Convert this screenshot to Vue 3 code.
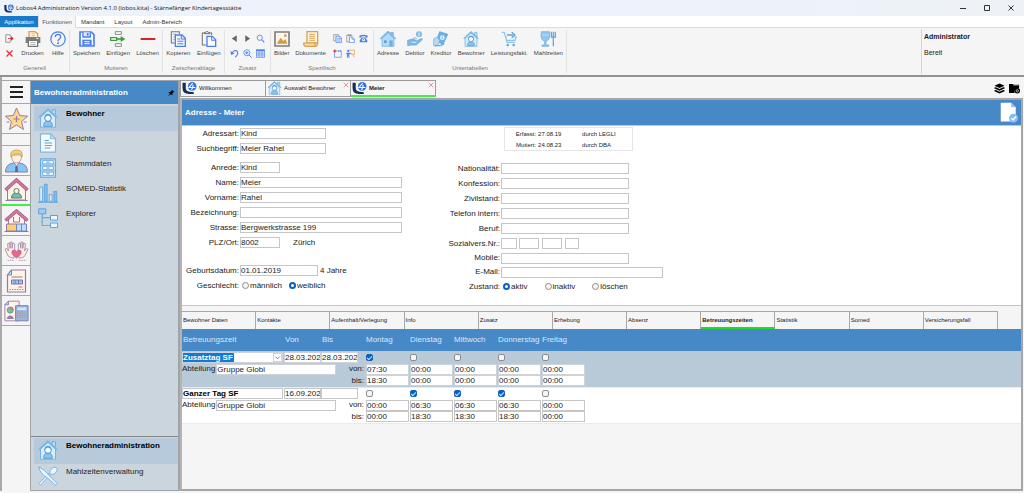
<script setup>
import { ref } from 'vue'

const menus = ['Applikation', 'Funktionen', 'Mandant', 'Layout', 'Admin-Bereich']

const groups = [
  {
    name: 'Generell',
    size: 'w70',
    small: [['exit', 'Beenden'], ['cross', 'Abbrechen']],
    smallCols: 'one',
    tools: [['printer', 'Drucken'], ['help', 'Hilfe']],
  },
  {
    name: 'Mutieren',
    size: 'w93',
    tools: [['save', 'Speichern'], ['insert', 'Einfügen'], ['minus', 'Löschen']],
  },
  {
    name: 'Zwischenablage',
    size: 'w62',
    tools: [['copy', 'Kopieren'], ['paste', 'Einfügen']],
  },
  {
    name: 'Zusatz',
    size: 'w46',
    small: [
      ['prev', 'Zurück'], ['next', 'Weiter'], ['search', 'Suchen'],
      ['undo', 'Rückgängig'], ['zoomin', 'Vergrössern'], ['grid', 'Tabelle'],
    ],
    tools: [],
  },
  {
    name: 'Spezifisch',
    size: 'w103',
    tools: [['picture', 'Bilder'], ['scroll', 'Dokumente']],
    small: [
      ['copy', 'Kopie'], ['paste', 'Ablage'], ['phone', 'Telefon'],
      ['newdate', 'Termin'], ['board', 'Schulung'],
    ],
    smallLast: true,
  },
  {
    name: 'Untertabellen',
    size: 'w193',
    tools: [
      ['home', 'Adresse'], ['handcoin', 'Debitor'], ['cash', 'Kreditor'],
      ['resident', 'Bewohner'], ['cart', 'Leistungsfakt.'], ['meal', 'Mahlzeiten'],
    ],
  },
]

const rail = [
  { icon: 'star', label: 'Favoriten' },
  { icon: '', label: '' },
  { icon: 'person', label: 'Personen' },
  { icon: 'houseperson', label: 'Bewohner', active: true },
  { icon: 'housebig', label: 'Haus' },
  { icon: 'hands', label: 'Pflege' },
  { icon: 'invoice', label: 'Rechnungen' },
  { icon: 'calc', label: 'Abrechnung' },
]

const nav = [
  { icon: 'resident', label: 'Bewohner', active: true },
  { icon: 'report', label: 'Berichte' },
  { icon: 'drawers', label: 'Stammdaten' },
  { icon: 'bars', label: 'SOMED-Statistik' },
  { icon: 'tree', label: 'Explorer' },
]
const modules = [
  { icon: 'resident', label: 'Bewohneradministration', active: true },
  { icon: 'cutlery', label: 'Mahlzeitenverwaltung' },
]

const docs = [
  { icon: 'logo', label: 'Willkommen' },
  { icon: 'resident', label: 'Auswahl Bewohner', closable: true },
  { icon: 'logo', label: 'Meier', closable: true, active: true },
]

const leftFields = [
  { id: 'art', label: 'Adressart:', value: 'Kind', size: 'm' },
  { id: 'such', label: 'Suchbegriff:', value: 'Meier Rahel', size: 'm', end: true },
  { id: 'anrede', label: 'Anrede:', value: 'Kind', size: 's' },
  { id: 'name', label: 'Name:', value: 'Meier', size: 'l' },
  { id: 'vorname', label: 'Vorname:', value: 'Rahel', size: 'l' },
  { id: 'bez', label: 'Bezeichnung:', value: '', size: 'l' },
  { id: 'strasse', label: 'Strasse:', value: 'Bergwerkstrasse 199', size: 'l' },
  { id: 'plz', label: 'PLZ/Ort:', value: '8002', size: 's', note: 'Zürich', far: true, wide: true },
  { id: 'geb', label: 'Geburtsdatum:', value: '01.01.2019', size: 'd', note: '4 Jahre' },
]
const rightFields = [
  { id: 'nat', label: 'Nationalität:' },
  { id: 'konf', label: 'Konfession:' },
  { id: 'ziv', label: 'Zivilstand:' },
  { id: 'tel', label: 'Telefon intern:' },
  { id: 'beruf', label: 'Beruf:' },
]
const geschlecht = ref('weiblich')
const zustand = ref('aktiv')

const tabs = [
  'Bewohner Daten', 'Kontakte', 'Aufenthalt/Verlegung', 'Info', 'Zusatz', 'Erhebung',
  'Absenz', 'Betreuungszeiten', 'Statistik', 'Somed', 'Versicherungsfall',
]
const days = ['Montag', 'Dienstag', 'Mittwoch', 'Donnerstag', 'Freitag']
const entries = ref([
  {
    name: 'Zusatztag SF', selected: true, from: '28.03.2022', to: '28.03.2022', dept: 'Gruppe Globi',
    on: [true, false, false, false, false],
    von: ['07:30', '00:00', '00:00', '00:00', '00:00'],
    bis: ['18:30', '00:00', '00:00', '00:00', '00:00'],
  },
  {
    name: 'Ganzer Tag SF', selected: false, from: '16.09.202', to: '', dept: 'Gruppe Globi',
    on: [false, true, true, true, false],
    von: ['00:00', '06:30', '06:30', '06:30', '00:00'],
    bis: ['00:00', '18:30', '18:30', '18:30', '00:00'],
  },
])
</script>

<template>
  <div class="app">
    <svg class="sprite" aria-hidden="true">
      <symbol id="logo" viewBox="0 0 28 24">
        <path d="M1 2h6v10q0 6 7 7l8 1v3h-9Q1 23 1 12z" fill="#1b2a5e" />
        <ellipse cx="19" cy="9" rx="8" ry="8" fill="#2f6fe4" />
        <path d="M20 3l-7 8h12M21 6l-3 10" stroke="#fff" stroke-width="2" fill="none" />
      </symbol>
      <symbol id="exit" viewBox="0 0 24 24">
        <path d="M14 7V2H2v20h12v-5" fill="none" stroke="#777" stroke-width="2" />
        <path d="M8 12h13M16 7l6 5-6 5z" fill="#d4222a" stroke="#d4222a" stroke-width="2" />
      </symbol>
      <symbol id="cross" viewBox="0 0 24 24">
        <path d="M4 4l16 16M20 4L4 20" stroke="#d9363e" stroke-width="3.500" />
      </symbol>
      <symbol id="thin-x" viewBox="0 0 24 24">
        <path d="M3 3l18 18M21 3L3 21" stroke="currentColor" stroke-width="3" />
      </symbol>
      <symbol id="printer" viewBox="0 0 24 24">
        <path d="M6 9V1h9l4 3v5" fill="#fff1dd" stroke="#e0a04c" stroke-width="2" />
        <path d="M10 4h5M10 7h5" stroke="#e0a04c" />
        <path d="M1 9h22v9h-4v-4H5v4H1z" fill="#7c7c7c" />
        <path d="M5 14h14v9H5z" fill="#fff" stroke="#777" stroke-width="2" />
        <path d="M8 17h8M8 20h8" stroke="#888" />
        <path d="M17 11h3" stroke="#fff" stroke-width="1.5" />
      </symbol>
      <symbol id="help" viewBox="0 0 24 24">
        <circle cx="12" cy="12" r="10.8" fill="none" stroke="#4c7ff0" stroke-width="1.8" />
        <path d="M8 9q0-4 4-4t4 3.500q0 2-2 3.500-2 1.300-2 3.500" fill="none" stroke="#4c7ff0" stroke-width="2" />
        <circle cx="12" cy="18.500" r="1.500" fill="#4c7ff0" />
      </symbol>
      <symbol id="save" viewBox="0 0 24 24">
        <path d="M1.500 1.500h17l4 4v17h-21z" fill="#f5f8ff" stroke="#4c7ff0" stroke-width="2.500" />
        <path d="M6 2v7h11V2" fill="#dfe8ff" stroke="#4c7ff0" stroke-width="2" />
        <path d="M13 3v4" stroke="#4c7ff0" stroke-width="2.500" />
        <path d="M5 22v-9h14v9z" fill="#4c7ff0" />
        <path d="M8 16h8M8 19h8" stroke="#fff" stroke-width="1.500" />
      </symbol>
      <symbol id="insert" viewBox="0 0 24 24">
        <path d="M8 1h9v4H8zM8 19h9v4H8z" fill="#fff" stroke="#888" stroke-width="1.500" />
        <path d="M1 10h9v4H1z" fill="#fff" stroke="#35a03a" stroke-width="1.800" />
        <path d="M10 12h8" stroke="#35a03a" stroke-width="2.500" />
        <path d="M16 7.500l7 4.500-7 4.500z" fill="#35a03a" />
      </symbol>
      <symbol id="minus" viewBox="0 0 24 24">
        <path d="M1 12h22" stroke="#d8232b" stroke-width="3" />
      </symbol>
      <symbol id="copy" viewBox="0 0 24 24">
        <path d="M7 18H2V1h12v4" fill="none" stroke="#777" stroke-width="1.600" />
        <path d="M5 5h4M5 9h2M5 13h2" stroke="#777" />
        <path d="M8 6h10l5 5v12H8z" fill="#f5f8ff" stroke="#4c7ff0" stroke-width="2" />
        <path d="M17 6v6h6M11 12h4M11 15.500h9M11 19h9" fill="none" stroke="#4c7ff0" stroke-width="1.600" />
      </symbol>
      <symbol id="paste" viewBox="0 0 24 24">
        <path d="M8 21H2V3h14v3" fill="none" stroke="#777" stroke-width="1.600" />
        <path d="M5 4V2h2q2-3 4 0h2v2z" fill="#f5f5f5" stroke="#666" stroke-width="1.400" />
        <path d="M9 8h8l5 5v10H9z" fill="#fff" stroke="#4c7ff0" stroke-width="2" />
        <path d="M16 8v6h6" fill="none" stroke="#4c7ff0" stroke-width="1.600" />
      </symbol>
      <symbol id="prev" viewBox="0 0 24 24"><path d="M18 3v18L5 12z" fill="#666" /></symbol>
      <symbol id="next" viewBox="0 0 24 24"><path d="M6 3v18l13-9z" fill="#666" /></symbol>
      <symbol id="search" viewBox="0 0 24 24">
        <circle cx="10" cy="10" r="7" fill="none" stroke="#5c8bf2" stroke-width="2.400" />
        <path d="M15 15l7 7" stroke="#5c8bf2" stroke-width="3" />
      </symbol>
      <symbol id="zoomin" viewBox="0 0 24 24">
        <circle cx="10" cy="10" r="8" fill="none" stroke="#5c8bf2" stroke-width="2.400" />
        <path d="M16 16l7 7M6 10h8M10 6v8" stroke="#4c7ff0" stroke-width="2.600" />
      </symbol>
      <symbol id="undo" viewBox="0 0 24 24">
        <path d="M5 11Q12 1 19 6q5 8-5 16" fill="none" stroke="#4c7ff0" stroke-width="3" />
        <path d="M1 5l2 11 9-4z" fill="#4c7ff0" />
      </symbol>
      <symbol id="grid" viewBox="0 0 24 24">
        <path d="M1 2h22v20H1z" fill="#eaf1ff" stroke="#4c7ff0" stroke-width="2" />
        <path d="M1 4h22" stroke="#4c7ff0" stroke-width="4" />
        <path d="M1 11h22M1 16h22M8 4v18M16 4v18" stroke="#4c7ff0" stroke-width="1.700" />
      </symbol>
      <symbol id="picture" viewBox="0 0 24 24">
        <path d="M1.500 1.500h21v21h-21z" fill="#fbf7f0" stroke="#7c7c7c" stroke-width="2.400" />
        <path d="M4 19l6-9 4 5 3-3 3 7z" fill="#d9993f" />
        <circle cx="17" cy="7" r="2" fill="#d9993f" />
      </symbol>
      <symbol id="scroll" viewBox="0 0 24 24">
        <path d="M6 1h16v17H6z" fill="#fff6e6" stroke="#dba04d" stroke-width="2" />
        <path d="M9 5h9M9 8h9M9 11h9M9 14h9" stroke="#dba04d" stroke-width="1.400" />
        <path d="M1 18h17v5H4q-3 0-3-5zM18 23q4 0 4-5" fill="#f6d8a7" stroke="#dba04d" stroke-width="1.800" />
      </symbol>
      <symbol id="phone" viewBox="0 0 24 24">
        <path d="M1 9V6q0-4 11-4t11 4v3h-6V6H7v3z" fill="#4c7ff0" />
        <path d="M7 9h10l5 8v5H2v-5z" fill="#4c7ff0" />
        <circle cx="12" cy="15" r="4" fill="#fff" /><circle cx="12" cy="15" r="1.500" fill="#4c7ff0" />
      </symbol>
      <symbol id="newdate" viewBox="0 0 24 24">
        <path d="M4 10v12h18V5H11" fill="none" stroke="#5c8bf2" stroke-width="2" />
        <path d="M15 3v5M20 3v5" stroke="#5c8bf2" stroke-width="2" />
        <path d="M5 1v9M.500 5.500h9" stroke="#dd2f3a" stroke-width="3" />
      </symbol>
      <symbol id="board" viewBox="0 0 24 24">
        <path d="M9 3h14v11H13M18 14l4 8" fill="none" stroke="#dba04d" stroke-width="2" />
        <circle cx="6" cy="5" r="3" fill="#4c7ff0" />
        <path d="M1 10h13v2.500H9V23H7v-6H6v6H3v-9H1z" fill="#4c7ff0" />
      </symbol>
      <symbol id="home" viewBox="0 0 24 24">
        <path d="M16 2h4v7h-4z" fill="#8cc4ee" stroke="#69a9db" />
        <path d="M3 11v12h18V11l-9-8z" fill="#b4dcf8" stroke="#69a9db" />
        <path d="M.500 12L12 1l11.500 11" fill="none" stroke="#7bb8e8" stroke-width="2.400" />
        <path d="M6 14h4v4H6z" fill="#5b9fd6" /><path d="M14 14h5v9h-5z" fill="#6faee0" />
      </symbol>
      <symbol id="resident" viewBox="0 0 24 24">
        <path d="M17 2h4v7h-4z" fill="#b4dcf8" stroke="#69a9db" />
        <path d="M3 11v12h18V11l-9-8z" fill="#d6ecfc" stroke="#69a9db" />
        <path d="M1 11.500L12 1.500l11 10" fill="none" stroke="#7bb8e8" stroke-width="2" />
        <path d="M7 22q-1-6 5-6t5 6z" fill="#8cc4f0" stroke="#4f97d1" />
        <circle cx="12" cy="12" r="4" fill="#f5fbff" stroke="#4f97d1" stroke-width="1.200" />
        <path d="M8 12q0-5 4-5t4 5q-2-3-4-3t-4 3z" fill="#5ba2dc" />
      </symbol>
      <symbol id="handcoin" viewBox="0 0 24 24">
        <circle cx="18" cy="5" r="4.500" fill="#7cbbe9" /><path d="M18 2v6" stroke="#e3f3ff" stroke-width="1.500" />
        <path d="M9 11l3-1 3 2" stroke="#4f97d1" fill="none" />
        <path d="M1 14l7-2q6 1 6 3l8-4q2 1 0 3l-8 7H6l-5 1z" fill="#7cbbe9" stroke="#5ba2dc" />
        <path d="M7 17h7" stroke="#d5ecfd" stroke-width="1.500" />
      </symbol>
      <symbol id="cash" viewBox="0 0 24 24">
        <path d="M10 1l12 4-7 15-10-5z" fill="#6db1e6" stroke="#4f97d1" />
        <circle cx="14" cy="10" r="3.500" fill="#e3f3ff" /><path d="M14 8v4" stroke="#4f97d1" />
        <path d="M1 12l5-3 4 5-1 5-6 4-2-1z" fill="#b4dcf8" stroke="#69a9db" />
        <path d="M3 22h8l6-3" fill="none" stroke="#69a9db" stroke-width="2" />
      </symbol>
      <symbol id="cart" viewBox="0 0 24 24">
        <path d="M1 2h4l4 15h12" fill="none" stroke="#8cc4ee" stroke-width="1.800" />
        <path d="M6 9h3M20 9h3l-2 5H8" fill="none" stroke="#8cc4ee" stroke-width="1.800" />
        <path d="M9 6h9M16 2l5 4-5 4" fill="none" stroke="#5ba2dc" stroke-width="2" />
        <circle cx="10" cy="21" r="1.800" fill="#5ba2dc" /><circle cx="19" cy="21" r="1.800" fill="#5ba2dc" />
      </symbol>
      <symbol id="meal" viewBox="0 0 24 24">
        <path d="M2 1h12q2 13-5 14v6h4v2H3v-2h4v-6Q0 14 2 1z" fill="#8fc8f2" stroke="#69a9db" />
        <path d="M3 6h10" stroke="#d5ecfd" />
        <path d="M17 1v8h6V1M20 1v22" fill="none" stroke="#69a9db" stroke-width="2" />
      </symbol>
      <symbol id="star" viewBox="0 0 24 24">
        <path d="M12 1l3.200 7.500 8 .700-6.200 5.300 2 8L12 18l-7 4.500 2-8L.800 9.200l8-.700z" fill="#fbd98a" stroke="#9a79ab" />
        <path d="M12 9v6M9 12h6M2 15h3M19 15h3" stroke="#9a79ab" stroke-width="1.200" />
      </symbol>
      <symbol id="person" viewBox="0 0 24 24">
        <path d="M1 23q0-8 8-9h6q8 1 8 9z" fill="#85c6f2" stroke="#8d78a8" />
        <path d="M9 13l3 4 3-4v-2H9z" fill="#fff0e0" stroke="#8d78a8" stroke-width=".700" />
        <path d="M7 6q0 8 5 8t5-8z" fill="#fff0e0" stroke="#b08aa0" stroke-width=".800" />
        <path d="M6.500 8Q5 1 12 1t5.500 7q-1-3-4-3.500Q8 5 6.500 8z" fill="#f9cf74" stroke="#b3913f" stroke-width=".700" />
        <path d="M11 17h2l.500 6h-3z" fill="#6d5e96" />
      </symbol>
      <symbol id="houseperson" viewBox="0 0 24 24">
        <path d="M3 11v11h18V11l-9-8z" fill="#fff3e4" stroke="#9a79ab" />
        <path d="M1 12L12 2l11 10" fill="none" stroke="#8f5c8d" stroke-width="3.400" />
        <path d="M1 12L12 2l11 10" fill="none" stroke="#d9789c" stroke-width="1.900" />
        <path d="M7 20q0-5 5-5t5 5z" fill="#79bda2" stroke="#58807f" />
        <circle cx="12" cy="13" r="2.600" fill="#fff0e0" stroke="#58807f" />
        <path d="M1 22.500h22" stroke="#9a79ab" />
      </symbol>
      <symbol id="housebig" viewBox="0 0 24 24">
        <path d="M4 10v12h16V10l-8-7z" fill="#fff3e4" stroke="#9a79ab" />
        <path d="M1 11.500L12 2l11 9.500" fill="none" stroke="#8f5c8d" stroke-width="3.400" />
        <path d="M1 11.500L12 2l11 9.500" fill="none" stroke="#d9789c" stroke-width="1.900" />
        <path d="M2 15h10v7H2z" fill="#fbd06f" stroke="#9a79ab" />
        <path d="M12 15h10v7H12z" fill="#b9e0fb" stroke="#7a80b8" /><path d="M17 15v7M9 8v5h6V8" stroke="#9a79ab" fill="none" />
        <path d="M0 22.500h24" stroke="#7a80b8" />
      </symbol>
      <symbol id="hands" viewBox="0 0 28 24">
        <path d="M11 20q-3 0-6-2l-4-8 2-1 2 3-1-8 2-1 1 6V2h2v7l1-6 2 1v9z" fill="#fff0e0" stroke="#a68aa8" />
        <path d="M17 20q3 0 6-2l4-8-2-1-2 3 1-8-2-1-1 6V2h-2v7l-1-6-2 1v9z" fill="#fff0e0" stroke="#a68aa8" />
        <path d="M14 20l-5-5q-1-4 2-4 2 0 3 2 1-2 3-2 3 0 2 4z" fill="#f0648c" stroke="#a8507a" stroke-width=".700" />
        <path d="M4 22.500h7M17 22.500h8" stroke="#a68aa8" stroke-dasharray="1.500 1" />
      </symbol>
      <symbol id="invoice" viewBox="0 0 24 24">
        <path d="M7 1h14v22H3V6z" fill="#fff3e4" stroke="#9a79ab" stroke-width="1.200" />
        <path d="M3 6h4V1z" fill="#b9e0fb" stroke="#7a80b8" />
        <path d="M7 8h11" stroke="#9a79ab" /><path d="M7 11h11v4H7z" fill="#9fc2ec" stroke="#6d7ab5" /><path d="M10.500 11v4M14 11v4" stroke="#6d7ab5" />
        <path d="M14 18h4" stroke="#e0607f" /><path d="M5 20.500h14" stroke="#a68aa8" stroke-dasharray="1.500 1" />
      </symbol>
      <symbol id="calc" viewBox="0 0 28 24">
        <path d="M5 1h12v22H1V5z" fill="#fff3e4" stroke="#9a79ab" />
        <path d="M1 5h4V1z" fill="#b9e0fb" stroke="#7a80b8" />
        <circle cx="7" cy="11" r="3.500" fill="#76c39f" stroke="#58807f" stroke-width=".700" /><path d="M7 11V7.500a3.500 3.500 0 0 1 3.500 3.500z" fill="#f0648c" />
        <path d="M3 21q1-4 4-4t4 4z" fill="#9a79ab" />
        <path d="M13 6h14v17H13z" fill="#9bb5dd" stroke="#7a78b0" /><path d="M15 8h10v3H15z" fill="#c8e8fc" />
        <path d="M15 13h2v2h-2zM19 13h2v2h-2zM15 17h2v2h-2zM19 17h2v2h-2z" fill="#f6d8a7" stroke="#8d78a8" stroke-width=".600" /><path d="M23 13h2v7h-2z" fill="#76c39f" />
      </symbol>
      <symbol id="report" viewBox="0 0 24 24">
        <path d="M3 1h12l6 6v16H3z" fill="#f7fbff" stroke="#7fb5e2" stroke-width="1.400" />
        <path d="M15 1v6h6z" fill="#b4dcf8" stroke="#7fb5e2" />
        <path d="M8 9h5M8 12h9M8 15h9M8 18h7" stroke="#5ba2dc" stroke-width="1.200" />
      </symbol>
      <symbol id="drawers" viewBox="0 0 24 24">
        <path d="M3 1h18v22H3z" fill="#c4e2f8" stroke="#6aaade" stroke-width="1.300" />
        <path d="M5.500 3h13v4h-13zM5.500 10h13v4h-13zM5.500 17h13v4h-13z" fill="#eef7ff" stroke="#6aaade" />
        <path d="M10 5h4M10 12h4M10 19h4" stroke="#5ba2dc" stroke-width="1.200" /><path d="M3 8.500h18M3 15.500h18" stroke="#6aaade" />
      </symbol>
      <symbol id="bars" viewBox="0 0 24 24">
        <path d="M2 5h3.500v17H2zM13.500 14H17v8h-3.500z" fill="#d6ecfc" stroke="#5ba2dc" />
        <path d="M7.500 1.500H11V22H7.500zM19 10h3.500v12H19z" fill="#7ebbf0" stroke="#5ba2dc" />
        <path d="M0 23h24" stroke="#5ba2dc" stroke-width="1.400" />
      </symbol>
      <symbol id="tree" viewBox="0 0 24 24">
        <path d="M5 7v14h10M5 11.500h10" fill="none" stroke="#6aaade" stroke-width="1.400" />
        <path d="M.800 1h8.500v6H.800z" fill="#9ccdfa" stroke="#5ba2dc" stroke-width="1.200" />
        <path d="M15 9h8.500v5.500H15zM15 18h8.500v5.500H15z" fill="#eaf5ff" stroke="#5ba2dc" stroke-width="1.200" />
      </symbol>
      <symbol id="cutlery" viewBox="0 0 24 24">
        <path d="M15 10L3 23l-2-2L14 8z" fill="#eaf5ff" stroke="#6aaade" />
        <path d="M14 10q-1-5 4-8 5-2 5 3-2 6-9 5z" fill="#eaf5ff" stroke="#6aaade" />
        <path d="M1 1q7 3 12 10l10 10-2 2L11 14Q2 9 1 1z" fill="#eaf5ff" stroke="#6aaade" />
      </symbol>
      <symbol id="layers" viewBox="0 0 24 24">
        <path d="M12 1l11 5-11 5L1 6z" /><path d="M1 10l3-1 8 4 8-4 3 1v2l-11 5-11-5zM1 16l3-1 8 4 8-4 3 1v2l-11 5-11-5z" />
      </symbol>
      <symbol id="folder" viewBox="0 0 24 24">
        <path d="M0 2h8l2 2h12v8h-4q-6 1-6 10H0z" /><circle cx="18" cy="17" r="6" /><path d="M10 5h11" stroke="#f5f5f5" />
        <circle cx="18" cy="17" r="2.500" fill="none" stroke="#f5f5f5" stroke-width="1.500" />
      </symbol>
      <symbol id="pin" viewBox="0 0 24 24">
        <path d="M14 2l8 7-3 1-3 4 1 5-5-3-9 6 6-8-5-4 6-1 4-4z" />
      </symbol>
      <symbol id="docok" viewBox="0 0 24 28">
        <path d="M1 1h14l6 6v19H1z" fill="#fff" /><path d="M15 1v6h6z" fill="#8fc1ee" />
        <circle cx="18" cy="21.500" r="6" fill="#86bdf2" /><path d="M15 21.500l2.500 2.500 4-5" stroke="#fff" stroke-width="1.800" fill="none" />
      </symbol>
    </svg>

    <header class="titlebar">
      <svg class="i10"><use href="#logo" /></svg>
      <h1>Lobos4 Administration Version 4.1.0 (lobos.kita) - Stärnefänger Kindertagesstätte</h1>
      <div class="winbtns">
        <button aria-label="Minimieren"><svg viewBox="0 0 6 6"><path d="M0 3.500h6" /></svg></button>
        <button aria-label="Maximieren"><svg viewBox="0 0 6 6"><path d="M.500.500h5v5h-5z" /></svg></button>
        <button aria-label="Schliessen"><svg viewBox="0 0 6 6"><path d="M.500.500l5 5M5.500.500l-5 5" /></svg></button>
      </div>
    </header>

    <nav class="menubar">
      <button v-for="(m, i) in menus" :key="m" :class="{ primary: i === 0, open: i === 1 }">{{ m }}</button>
    </nav>

    <div class="ribbon">
      <section v-for="g in groups" :key="g.name" class="group" :class="g.size">
        <div class="tools">
          <div v-if="g.small" class="small" :class="[g.smallCols, { last: g.smallLast }]">
            <button v-for="s in g.small" :key="s[0]" :aria-label="s[1]"><svg><use :href="'#' + s[0]" /></svg></button>
          </div>
          <button v-for="t in g.tools" :key="t[0]" class="tool">
            <svg><use :href="'#' + t[0]" /></svg>{{ t[1] }}
          </button>
        </div>
        <h2>{{ g.name }}</h2>
      </section>
      <div class="status">
        <strong>Administrator</strong>
        <span>Bereit</span>
      </div>
    </div>

    <div class="workspace">
      <nav class="rail">
        <button class="burger" aria-label="Menü"><span></span><span></span><span></span></button>
        <template v-for="r in rail" :key="r.icon">
          <button v-if="r.icon" :class="{ active: r.active }" :aria-label="r.label"><svg><use :href="'#' + r.icon" /></svg></button>
          <div v-else class="spacer"></div>
        </template>
      </nav>

      <aside class="sidebar">
        <header><h2>Bewohneradministration</h2><svg><use href="#pin" /></svg></header>
        <div class="navlist">
          <button v-for="n in nav" :key="n.label" :class="{ active: n.active }"><svg><use :href="'#' + n.icon" /></svg>{{ n.label }}</button>
        </div>
        <div class="navlist modules">
          <button v-for="n in modules" :key="n.label" :class="{ active: n.active }"><svg><use :href="'#' + n.icon" /></svg>{{ n.label }}</button>
        </div>
      </aside>

      <main>
        <div class="doctabs">
          <div v-for="d in docs" :key="d.label" class="doctab" :class="{ active: d.active }">
            <button class="doclabel"><svg><use :href="'#' + d.icon" /></svg>{{ d.label }}</button>
            <button v-if="d.closable" class="close" :aria-label="d.label + ' schliessen'"><svg><use href="#thin-x" /></svg></button>
          </div>
          <div class="docactions">
            <button aria-label="Ebenen"><svg><use href="#layers" /></svg></button>
            <button aria-label="Ordner"><svg><use href="#folder" /></svg></button>
          </div>
        </div>

        <div class="panel">
          <header class="panelhead">
            <h2>Adresse - Meier</h2>
            <button aria-label="Dokument"><svg><use href="#docok" /></svg></button>
          </header>

          <form class="form" @submit.prevent>
            <div class="col left">
              <div v-for="f in leftFields" :key="f.id" class="field" :class="{ end: f.end, wide: f.wide }">
                <label :for="f.id">{{ f.label }}</label>
                <input :id="f.id" type="text" :class="f.size" :value="f.value" />
                <span v-if="f.note" class="note" :class="{ far: f.far }">{{ f.note }}</span>
              </div>
              <div class="field" role="radiogroup" aria-label="Geschlecht">
                <span class="lab">Geschlecht:</span>
                <label class="radio"><input v-model="geschlecht" type="radio" name="g" value="männlich" />männlich</label>
                <label class="radio"><input v-model="geschlecht" type="radio" name="g" value="weiblich" />weiblich</label>
              </div>
            </div>

            <div class="col right">
              <dl class="audit">
                <dt>Erfasst:</dt><dd>27.08.19</dd><dd>durch LEGLI</dd>
                <dt>Mutiert:</dt><dd>24.08.23</dd><dd>durch DBA</dd>
              </dl>
              <div v-for="f in rightFields" :key="f.id" class="field">
                <label :for="f.id">{{ f.label }}</label>
                <input :id="f.id" type="text" class="r" />
              </div>
              <div class="field">
                <label for="soz">Sozialvers.Nr.:</label>
                <div class="parts">
                  <input id="soz" type="text" aria-label="Sozialvers.Nr. Teil 1" />
                  <input type="text" class="p2" aria-label="Sozialvers.Nr. Teil 2" />
                  <input type="text" class="p2" aria-label="Sozialvers.Nr. Teil 3" />
                  <input type="text" class="p4" aria-label="Sozialvers.Nr. Teil 4" />
                </div>
              </div>
              <div class="field tight">
                <label for="mobile">Mobile:</label><input id="mobile" type="text" class="r" />
              </div>
              <div class="field tight">
                <label for="mail">E-Mail:</label><input id="mail" type="text" class="l" />
              </div>
              <div class="field zustand" role="radiogroup" aria-label="Zustand">
                <span class="lab">Zustand:</span>
                <label v-for="z in ['aktiv', 'inaktiv', 'löschen']" :key="z" class="radio">
                  <input v-model="zustand" type="radio" name="z" :value="z" />{{ z }}
                </label>
              </div>
            </div>
          </form>

          <div class="tabs" role="tablist">
            <button v-for="t in tabs" :key="t" role="tab" :class="{ active: t === 'Betreuungszeiten' }">{{ t }}</button>
          </div>

          <table>
            <colgroup>
              <col class="c-name" /><col class="c-from" /><col class="c-to" /><col class="c-lab" />
              <col v-for="d in days" :key="d" class="c-day" /><col />
            </colgroup>
            <thead>
              <tr>
                <th>Betreuungszeit</th><th>Von</th><th colspan="2">Bis</th>
                <th v-for="d in days" :key="d" class="day">{{ d }}</th><th></th>
              </tr>
            </thead>
            <tbody v-for="e in entries" :key="e.name" :class="{ selected: e.selected }">
              <tr>
                <td>
                  <div v-if="e.selected" class="combo">
                    <select aria-label="Betreuungszeit"><option>{{ e.name }}</option></select>
                    <svg viewBox="0 0 8 8"><path d="M1.500 3L4 5.500 6.500 3" /></svg>
                  </div>
                  <input v-else type="text" class="name" aria-label="Betreuungszeit" :value="e.name" />
                </td>
                <td><input type="text" class="date" aria-label="Von" :value="e.from" /></td>
                <td colspan="2"><input type="text" class="date" aria-label="Bis" :value="e.to" /></td>
                <td v-for="(d, i) in days" :key="d"><input v-model="e.on[i]" type="checkbox" :aria-label="d" /></td>
                <td></td>
              </tr>
              <tr>
                <td colspan="3"><label class="dept">Abteilung <input type="text" :value="e.dept" /></label></td>
                <td class="lab">von:</td>
                <td v-for="(d, i) in days" :key="d"><input type="text" class="time" :aria-label="d + ' von'" :value="e.von[i]" /></td>
                <td></td>
              </tr>
              <tr>
                <td colspan="3"></td>
                <td class="lab">bis:</td>
                <td v-for="(d, i) in days" :key="d"><input type="text" class="time" :aria-label="d + ' bis'" :value="e.bis[i]" /></td>
                <td></td>
              </tr>
            </tbody>
          </table>
        </div>
      </main>
    </div>
  </div>
</template>

<style>
body { background: #e9e9e9; }
</style>

<style scoped>
* { box-sizing: border-box; }
.app {
  display: flex;
  flex-direction: column;
  min-height: 100vh;
  padding-bottom: 2px;
  background: #f5f5f5;
  color: #222;
  font: 8px/10px "Liberation Sans", Arial, sans-serif;
}
.sprite { position: absolute; width: 0; height: 0; }
button { padding: 0; border: 0; background: none; color: inherit; font: inherit; }
input, select { font: inherit; color: inherit; }
h1, h2 { margin: 0; font: inherit; }
svg { flex: none; display: block; }

.titlebar {
  display: flex;
  align-items: center;
  height: 16px;
  padding: 0 10px 0 4px;
  gap: 2px;
  background: linear-gradient(90deg, #eef2f9, #edf2fc 60%, #eef2f6);
  font: 6px/10px "Open Sans", sans-serif;
  color: #111;
}
.i10 { width: 10px; height: 9px; }
.winbtns { display: flex; gap: 18px; margin-left: auto; }
.winbtns svg { width: 6px; height: 6px; fill: none; stroke: #333; stroke-width: 1; }

.menubar { display: flex; height: 12px; background: #fff; border-bottom: 1px solid #dcdcdc; font-size: 6px; color: #333; }
.menubar button { padding: 0 5px; height: 12px; }
.menubar .primary { width: 38px; padding: 0; background: #1979ca; color: #fff; height: 11px; }
.menubar .open { width: 38px; padding: 0; background: #f5f5f5; border: solid #dcdcdc; border-width: 0 1px; color: #555; }

.ribbon { display: flex; height: 49px; border-bottom: 2px solid #929292; font-size: 6px; line-height: 8px; color: #444; }
.group { display: flex; flex-direction: column; border-right: 1px solid #e2e2e2; margin: 2px 0; padding-top: 1px; }
.w70 { width: 70px; }
.w93 { width: 93px; }
.w62 { width: 62px; }
.w46 { width: 46px; }
.w103 { width: 103px; }
.w193 { width: 193px; }
.tools { display: flex; justify-content: space-around; height: 33px; }
.group h2 { text-align: center; color: #777; }
.tool { display: flex; flex-direction: column; align-items: center; gap: 2px; height: 27px; white-space: nowrap; }
.tool svg { width: 16px; height: 16px; }
.small { display: grid; grid-template-columns: repeat(3, 13px); grid-auto-rows: 15px; place-items: center; align-content: start; }
.small.one { grid-template-columns: 12px; }
.small.last { order: 2; }
.small svg { width: 9px; height: 9px; }
.status { display: flex; flex-direction: column; gap: 8px; width: 103px; margin: 1px 0 1px auto; padding: 4px 2px; border-left: 1px solid #d5d5d5; font-size: 7px; color: #222; }

.workspace { flex: 1; display: flex; padding: 3px 1px 0 0; border-left: 2px solid #a9a9a9; }
.rail { width: 28px; flex: none; }
.rail button { display: grid; place-items: center; width: 28px; height: 30px; border-bottom: 1px solid #a8a8a8; }
.rail button svg { width: 25px; height: 24px; }
.rail .burger { height: 24px; align-content: center; gap: 3px; border-top: 1px solid #a8a8a8; }
.rail .burger span { width: 13px; height: 2px; background: #222; }
.rail .spacer { height: 12px; border-bottom: 1px solid #a8a8a8; }
.rail button.active { border-bottom: 2px solid #3ff23f; }

.sidebar { display: flex; flex-direction: column; width: 150px; flex: none; background: #cad5dd; border: solid #a0a4a8; border-width: 1px 2px 1px 1px; }
.sidebar header { display: flex; align-items: center; justify-content: space-between; height: 23px; padding: 0 3px; background: #4788c7; color: #fff; }
.sidebar h2 { font-weight: bold; }
.sidebar header svg { width: 8px; height: 8px; fill: #000; }
.navlist { padding: 2px 0 0 3px; }
.navlist button { display: flex; align-items: flex-start; gap: 8px; width: 100%; height: 25px; padding: 2px 4px; text-align: left; line-height: 11px; }
.navlist svg { width: 20px; height: 20px; }
.navlist .active { background: #b7cadb; color: #000; font-weight: bold; }
.modules { margin-top: auto; padding: 1px 0 0 3px; border-top: 1px solid #858585; }
.modules button { height: 26px; }

main { flex: 1; min-width: 0; display: flex; flex-direction: column; }
.doctabs { display: flex; height: 18px; font-size: 6px; }
.doctab { display: flex; align-items: flex-start; justify-content: space-between; width: 86px; height: 17px; border: 1px solid #9c9c9c; }
.doctab + .doctab { border-left: 0; width: 85px; }
.doctab.active { border-bottom: 2px solid #3ff23f; font-weight: bold; }
.doclabel { display: flex; align-items: center; gap: 2px; padding: 0 1px; white-space: nowrap; }
.doclabel svg { width: 15px; height: 14px; }
.close { padding: 1px 1px; margin-left: -4px; }
.close svg { width: 6px; height: 6px; color: #ec7468; }
.docactions { display: flex; gap: 4px; margin-left: auto; padding: 3px 3px 0 0; align-items: flex-start; }
.docactions svg { width: 11px; height: 11px; }

.panel { flex: 1; border: 2px solid #a6a6a6; border-left: 2px solid #b4b4b4; display: flex; flex-direction: column; }
.panelhead { display: flex; align-items: center; justify-content: space-between; height: 26px; padding: 0 3px; background: #4788c7; color: #fff; border-bottom: 1px solid #b5c9dc; }
.panelhead h2 { font-weight: bold; }
.panelhead svg { width: 18px; height: 21px; }

.form { display: grid; grid-template-columns: 31% 1fr; background: #fff; border-bottom: 1px solid #c4c4c4; height: 180px; }
.field { display: flex; align-items: center; height: 15px; gap: 1px; white-space: nowrap; }
.field > label:first-child, .field > .lab { width: 57px; text-align: right; flex: none; }
.right .field > label:first-child, .right .field > .lab { width: 58px; }
.left .end { margin-bottom: 4px; }
.left .wide { margin-bottom: 13px; }
.right .field.tight { height: 14px; }
input[type="text"] { height: 11px; margin: 0; padding: 0; border: 1px solid #c6c6c6; border-radius: 0; background: #fff; outline: 0; min-width: 0; }
.m { width: 86px; }
.s { width: 40px; }
.l { width: 162px; }
.d { width: 78px; }
.r { width: 128px; }
.note { padding-left: 1px; }
.note.far { padding-left: 12px; }
.parts { display: flex; gap: 2px; }
.parts input { width: 16px; }
.parts .p2 { width: 20px; margin-right: 1px; }
.parts .p4 { width: 14px; }
.radio { display: flex; align-items: center; gap: 1px; margin-right: 4px; padding-left: 2px; }
input[type="radio"], input[type="checkbox"] { appearance: none; display: grid; place-items: center; width: 7px; height: 7px; margin: 0; border: 1px solid #8c8c8c; background: #f6f6f6; }
input[type="radio"] { border-radius: 50%; }
input[type="radio"]:checked { border: 2px solid #0a62bd; background: #fff; }
input[type="checkbox"] { border-radius: 2px; }
input[type="checkbox"]:checked { border-color: #0a62bd; background: #0a62bd; }
input[type="checkbox"]:checked::after { content: ""; width: 4px; height: 2px; border: solid #cfe2f5; border-width: 0 0 1px 1px; transform: rotate(-45deg); }
.zustand .radio { margin-right: 14px; }

.audit { display: grid; grid-template-columns: 31px 42px 1fr; align-items: center; width: 129px; height: 24px; margin: 1px 0 10px 62px; border: 1px solid #e6e6e6; font-size: 6px; gap: 0 2px; }
.audit dt { text-align: right; }
.audit dd { margin: 0; }

.tabs { display: grid; grid-template-columns: repeat(11, 1fr); margin: 5px 23px 0 0; height: 18px; font-size: 6px; border-top: 1px solid #a8a8a8; }
.tabs button { text-align: left; padding: 0 1px 2px; border-right: 1px solid #a8a8a8; white-space: nowrap; line-height: 12px; }
.tabs .active { font-weight: bold; border-bottom: 2px solid #22dd22; padding-bottom: 0; }

table { width: 100%; border-collapse: collapse; table-layout: fixed; }
.c-name { width: 102px; }
.c-from { width: 37px; }
.c-to { width: 24px; }
.c-lab { width: 21px; }
.c-day { width: 44px; }
th { height: 22px; padding: 0 1px; text-align: left; font-weight: normal; background: #4788c7; color: #dbe9f6; white-space: nowrap; }
th.day { padding: 0; }
td { height: 12px; padding: 0; line-height: 10px; vertical-align: middle; }
tbody { background: #fff; border-bottom: 1px solid #e3edf5; }
tbody.selected { background: #b8c9d8; }
td input, .combo { display: block; }
td .name, .combo { width: 101px; font-weight: bold; color: #000; }
td .date { width: 37px; }
td .time { width: 43px; }
td.lab { text-align: right; padding-right: 2px; }
.dept { display: flex; align-items: center; gap: 1px; }
.dept input { width: 120px; }
.selected input[type="text"] { border-color: #cdd3d8; }
.combo { position: relative; height: 11px; background: #fff; border: 1px solid #cdd3d8; }
.combo select { display: block; appearance: none; width: 99px; height: 9px; padding: 0; border: 0; border-radius: 0; background: linear-gradient(#0f7ad8, #0f7ad8) no-repeat 0 0 / 51px 100%; color: #fff; font-weight: bold; line-height: 9px; }
.combo svg { position: absolute; right: 0; top: 0; width: 9px; height: 9px; border: 1px solid #d4d4d4; fill: none; stroke: #777; }
</style>
